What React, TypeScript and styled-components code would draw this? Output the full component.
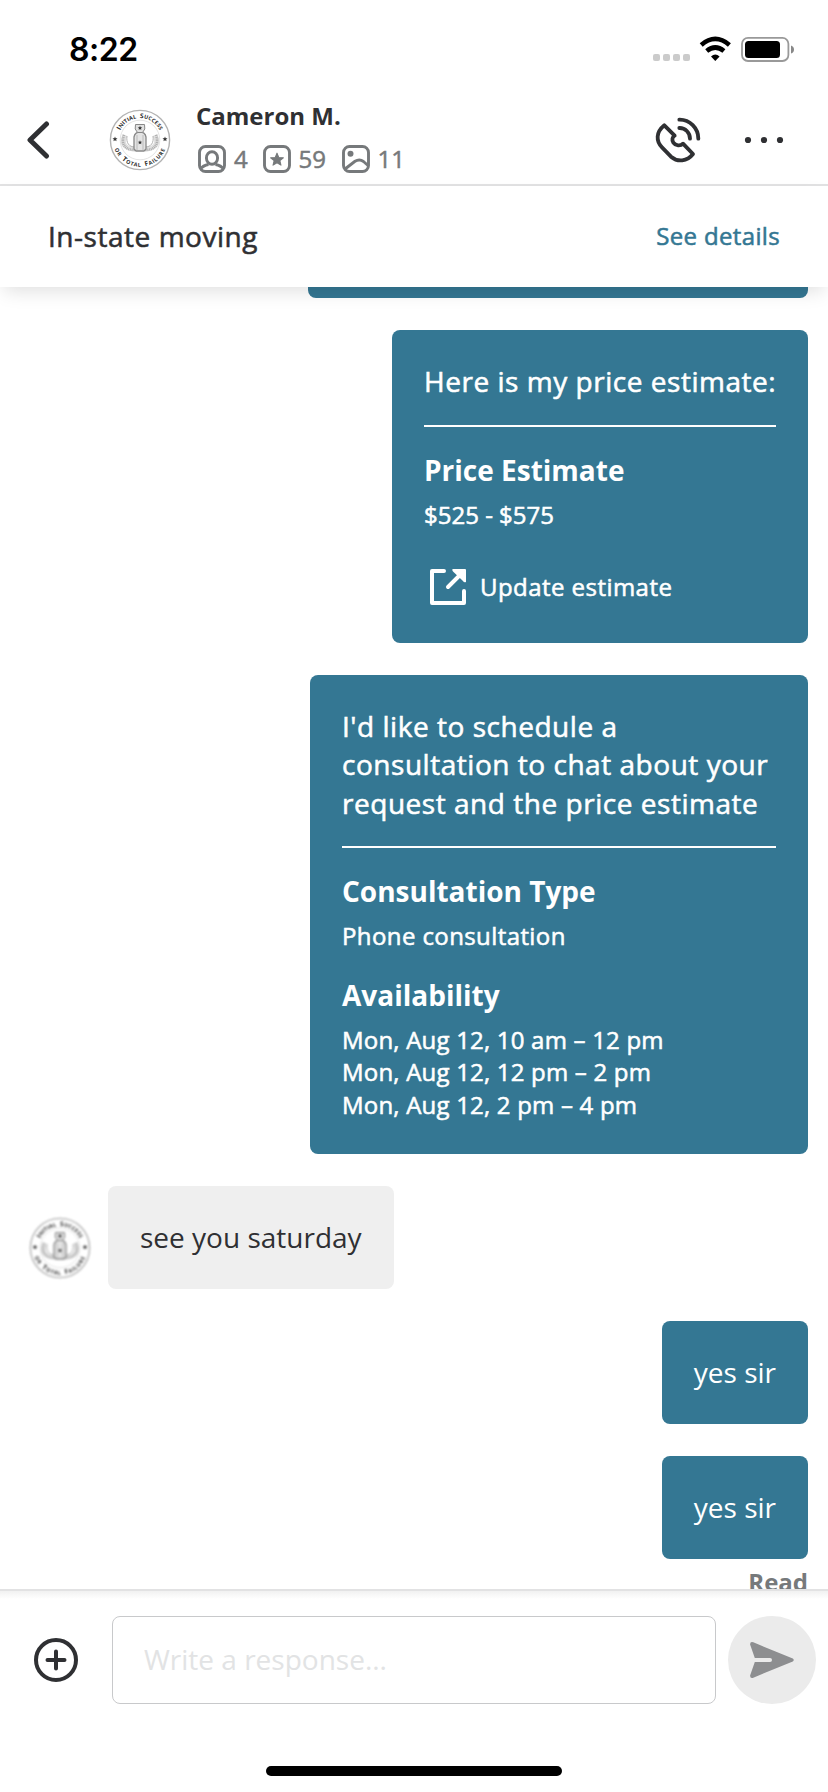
import { useId } from 'react';
import styled, { createGlobalStyle, css } from 'styled-components';

const teal = '#347793';
const mainText = '#2f3033';
const mutedText = '#76797b';
const white = '#ffffff';

const GlobalStyle = createGlobalStyle`
  * {
    box-sizing: border-box;
  }

  body {
    margin: 0;
    background: ${white};
    color: ${mainText};
    font-family: 'Open Sans', 'Noto Sans', sans-serif;
  }

  button {
    padding: 0;
    border: 0;
    background: transparent;
    font: inherit;
  }

  svg {
    display: block;
    flex-shrink: 0;
  }

  p, h1, h2, h3 {
    margin: 0;
  }
`;

// Open Sans has no static medium cut, so the regular one is thickened
const mediumText = css`
  font-weight: 400;
  letter-spacing: 0.53px;
  -webkit-text-stroke: 0.55px currentColor;
`;

const Screen = styled.div`
  display: flex;
  flex-direction: column;
  width: 828px;
  height: 1792px;
  overflow: hidden;
  background: ${white};
`;

const StatusBar = styled.div`
  display: flex;
  justify-content: space-between;
  flex-shrink: 0;
  height: 96px;
  padding: 30px 34px 0 69px;
`;

const Clock = styled.span`
  font: 600 32px/40px Inter, sans-serif;
  letter-spacing: -0.5px;
  color: #000;
`;

const Header = styled.header`
  display: flex;
  flex-shrink: 0;
  height: 90px;
  padding-left: 26px;
  border-bottom: 2px solid #e2e2e3;
`;

const BackButton = styled.button`
  width: 82px;
  height: 88px;
`;

const Contact = styled.div`
  display: flex;
  flex: 1;
  gap: 24px;
`;

const AvatarBox = styled.div<{ $soft?: boolean }>`
  width: 64px;
  height: 64px;
  margin-top: 12px;
  flex-shrink: 0;
  ${({ $soft }) => $soft && css`
    margin: 0 16px 9px 0;
    filter: blur(0.8px);
  `}
`;

const Name = styled.h1`
  padding-top: 3px;
  font-size: 24px;
  font-weight: 700;
  line-height: 33px;
`;

const Stats = styled.div`
  display: flex;
  align-items: center;
  margin: 10px 0 0 2px;
  color: ${mutedText};
  font-size: 24px;
  line-height: 34px;
  -webkit-text-stroke: 0.5px currentColor;
`;

const Stat = styled.div<{ $width: number }>`
  display: flex;
  align-items: center;
  gap: 8px;
  width: ${({ $width }) => $width}px;
`;

const HeaderActions = styled.div`
  display: flex;
  align-items: center;
  gap: 42px;
  padding: 0 44px 0 0;
`;

const JobBar = styled.div`
  position: relative;
  display: flex;
  align-items: center;
  justify-content: space-between;
  flex-shrink: 0;
  height: 101px;
  padding: 0 48px 2px;
  background: ${white};
  box-shadow: 0 8px 18px -4px rgba(0, 0, 0, 0.13);
`;

const JobTitle = styled.h2`
  ${mediumText}
  font-size: 28px;
  line-height: 38px;
`;

const DetailsLink = styled.button`
  ${mediumText}
  color: ${teal};
  font-size: 24px;
  line-height: 34px;
  letter-spacing: 0.35px;
`;

const Messages = styled.main`
  display: flex;
  flex-direction: column;
  align-items: flex-end;
  flex-shrink: 0;
  height: 1302px;
  padding-right: 20px;
  overflow: hidden;
`;

const bubble = css`
  border-radius: 8px;
  background: ${teal};
  color: ${white};
`;

const PreviousCard = styled.div`
  ${bubble}
  flex-shrink: 0;
  width: 500px;
  height: 43px;
  margin: -32px 0 32px;
`;

const Card = styled.section<{ $width: number; $height: number }>`
  ${bubble}
  flex-shrink: 0;
  width: ${({ $width }) => $width}px;
  height: ${({ $height }) => $height}px;
  margin-bottom: 32px;
  padding: 32px;
`;

const CardMessage = styled.p<{ $space: number }>`
  ${mediumText}
  padding-bottom: ${({ $space }) => $space}px;
  border-bottom: 2px solid ${white};
  font-size: 28px;
  line-height: 38.4px;
  white-space: pre;
`;

const CardTitle = styled.h3`
  margin-top: 24px;
  font-size: 28px;
  font-weight: 700;
  line-height: 38px;

  p + & {
    margin-top: 23px;
  }

  ${CardMessage} + & {
    margin-top: 24px;
  }
`;

const CardText = styled.p<{ $spacing?: number }>`
  ${mediumText}
  margin-top: 10px;
  font-size: 24px;
  line-height: 32.5px;
  letter-spacing: ${({ $spacing = 0.4 }) => $spacing}px;
  white-space: pre-line;
`;

const UpdateButton = styled.button`
  ${mediumText}
  display: flex;
  align-items: center;
  gap: 14px;
  margin: 36px 0 0 6px;
  color: ${white};
  font-size: 24px;
  line-height: 38px;
  letter-spacing: 0.45px;
`;

const Bubble = styled.p<{ $incoming?: boolean }>`
  ${bubble}
  flex-shrink: 0;
  height: 103px;
  padding: 32px;
  font-size: 28px;
  line-height: 39px;
  white-space: nowrap;
  ${({ $incoming }) => $incoming && css`
    background: #efefef;
    color: ${mainText};
  `}
`;

const IncomingRow = styled.div`
  display: flex;
  align-items: flex-end;
  align-self: flex-start;
  margin: 0 0 32px 28px;
`;

const Outgoing = styled.div`
  margin-bottom: 32px;

  &:last-of-type {
    margin-bottom: 7px;
  }
`;

const ReadReceipt = styled.p`
  color: ${mutedText};
  font-size: 24px;
  font-weight: 700;
  line-height: 32px;
`;

const Composer = styled.footer`
  display: flex;
  flex-shrink: 0;
  gap: 12px;
  height: 140px;
  padding: 25px 12px 0 34px;
  border-top: 2px solid #e2e2e3;
  background: linear-gradient(#f1f1f1, ${white} 8px);
`;

const AddButton = styled.button`
  width: 66px;
  height: 88px;
`;

const ResponseInput = styled.input`
  flex: 1;
  min-width: 0;
  height: 88px;
  padding: 0 31px 2px;
  border: 1px solid #c8c9cb;
  border-radius: 8px;
  outline: none;
  font: 400 28px 'Open Sans', 'Noto Sans', sans-serif;

  &::placeholder {
    color: #e2e3e4;
    opacity: 1;
  }
`;

const SendButton = styled.button`
  display: flex;
  align-items: center;
  justify-content: center;
  width: 88px;
  height: 88px;
  border-radius: 50%;
  background: #ebebeb;
`;

const HomeIndicator = styled.div`
  flex-shrink: 0;
  width: 296px;
  height: 10px;
  margin: 37px auto 0;
  border-radius: 5px;
  background: #000;
`;

const StatusIcons = () => (
	<svg width="142" height="36" viewBox="0 0 142 36">
		<g fill="#cbcbcb">
			<rect x="1" y="24" width="7" height="7" rx="2" />
			<rect x="11" y="24" width="7" height="7" rx="2" />
			<rect x="21" y="24" width="7" height="7" rx="2" />
			<rect x="31" y="24" width="7" height="7" rx="2" />
		</g>
		<g transform="translate(47.5 7.5)">
			<path d="M1.7 7.4Q15.8 -4.6 29.9 7.4" fill="none" stroke="#000" strokeWidth="4.6" />
			<path d="M7.2 13.6Q15.8 6.4 24.4 13.6" fill="none" stroke="#000" strokeWidth="4.6" />
			<path d="M11.5 19Q15.8 15.2 20.1 19L15.8 23.4Z" />
		</g>
		<rect x="90" y="7.8" width="46.4" height="23.2" rx="6" fill="none" stroke="#999" strokeWidth="1.8" />
		<rect x="93" y="11" width="35" height="17" rx="3.5" />
		<path d="M139 15.5Q142 16.5 142 19.5T139 23.5Z" fill="#888" />
	</svg>
);

const BackIcon = () => (
	<svg width="24" height="40" viewBox="0 0 24 40" fill="none" stroke={mainText} strokeWidth="5" strokeLinecap="round" strokeLinejoin="round">
		<path d="M20.5 4L4 20L20.5 36" />
	</svg>
);

const star = 'M0 -1L.28 -.32L1 -.27L.45 .18L.62 .88L0 .5L-.62 .88L-.45 .18L-1 -.27L-.28 -.32Z';

const Seal = () => {
	const id = useId();

	return (
		<svg width="64" height="64" viewBox="-32 -32 64 64">
			<defs>
				<path id={`${id}top`} d="M-22 0A22 22 0 0 1 22 0" />
				<path id={`${id}bottom`} d="M-26.8 0A26.8 26.8 0 0 0 26.8 0" />
			</defs>
			<g fill="none" stroke="#b3b3b3">
				<circle r="29.6" strokeWidth="1.4" />
				<circle r="19.8" stroke="#dcdcdc" strokeWidth="0.8" />
				<path d="M-15 -5C-19 3 -16 9 -5 9M15 -5C19 3 16 9 5 9" stroke="#dfdfdf" strokeWidth="5" />
				<path d="M-16 -5C-19 3 -16 10 -5 10M16 -5C19 3 16 10 5 10" stroke="#aaa" strokeWidth="2.6" strokeDasharray="0.9 0.9" />
				<path d="M-13 -4C-14 3 -11 7 -5 7M13 -4C14 3 11 7 5 7" stroke="#b4b4b4" />
				<path d="M-6 9V-3Q-5 -8 0 -8T6 -3V9L4 11H-4Z" fill="#e4e4e4" stroke="#888" strokeWidth="1.3" />
				<path d="M-3 10V-5M3 10V-5" stroke="#aaa" strokeWidth="0.7" />
				<path d="M-4.5 -15.5H4.5L4.8 -11L2.5 -7.5H-2.5L-4.8 -11Z" fill="#e0e0e0" stroke="#888" />
			</g>
			<g fill="#333">
				<path d={star} transform="translate(-25 -1) scale(2.5)" />
				<path d={star} transform="translate(25 -1) scale(2.5)" />
				<path d={star} transform="translate(0 -12) scale(2.2)" />
				<path d={star} transform="translate(0 2.4) scale(2.2)" />
			</g>
			<g fill="#2c2c2c" fontFamily="Open Sans, sans-serif" fontWeight="700" fontSize="6.6" textAnchor="middle" wordSpacing="1.5">
				<text letterSpacing="0.15">
					<textPath href={`#${id}top`} startOffset="50%">
						I<tspan fontSize="5.4">NITIAL</tspan> S<tspan fontSize="5.4">UCCESS</tspan>
					</textPath>
				</text>
				<text letterSpacing="0.65">
					<textPath href={`#${id}bottom`} startOffset="50%">
						<tspan fontSize="5.4">OR</tspan> T<tspan fontSize="5.4">OTAL</tspan> F<tspan fontSize="5.4">AILURE</tspan>
					</textPath>
				</text>
			</g>
		</svg>
	);
};

const statFrame = <rect x="1.5" y="1.5" width="25" height="25" rx="6" />;

const ProfileIcon = () => (
	<svg width="28" height="28" viewBox="0 0 28 28" fill="none" stroke={mutedText} strokeWidth="2.9">
		{statFrame}
		<ellipse cx="14" cy="13" rx="5.6" ry="6.3" />
		<path d="M2.5 24Q5 20.5 10.5 19.5M25.5 24Q23 20.5 17.5 19.5" />
	</svg>
);

const ReviewIcon = () => (
	<svg width="28" height="28" viewBox="0 0 28 28" fill="none" stroke={mutedText} strokeWidth="2.9">
		{statFrame}
		<path d={star} transform="translate(14 14.5) scale(6.4)" fill={mutedText} strokeWidth="0.16" strokeLinejoin="round" />
	</svg>
);

const PhotoIcon = () => (
	<svg width="28" height="28" viewBox="0 0 28 28" fill="none" stroke={mutedText} strokeWidth="2.9">
		{statFrame}
		<circle cx="8.5" cy="8.8" r="3" fill={mutedText} stroke="none" />
		<path d="M3 24L13 16.3Q17.5 13.5 21.5 16.5L26 20.5" />
	</svg>
);

const CallIcon = () => (
	<svg width="48" height="48" viewBox="720 345 144 144" fill="none" stroke={mainText} strokeWidth="11.5" strokeLinecap="round" strokeLinejoin="round">
		<path d="M751 373C725 394 726 421 744 439L771 467C791 484 819 482 837 459L807 428C799 436 785 435 778 425C773 416 775 408 782 404Z" />
		<path d="M796 381A31 32 0 0 1 828 413M796 356A56 57 0 0 1 853 413" />
	</svg>
);

const MoreIcon = () => (
	<svg width="40" height="8" viewBox="0 0 40 8" fill={mainText}>
		<circle cx="4" cy="4" r="3.1" />
		<circle cx="20" cy="4" r="3.1" />
		<circle cx="36" cy="4" r="3.1" />
	</svg>
);

const ExternalIcon = () => (
	<svg width="36" height="36" viewBox="0 0 36 36" fill="none" stroke={white} strokeWidth="4" strokeLinecap="round" strokeLinejoin="round">
		<path d="M14 2H2V34H34V22M18 18L29 7" />
		<path d="M23 0H35Q36 0 36 1V13Q34 14 33 12L23 2.5Q21.5 .5 23 0Z" fill={white} stroke="none" />
	</svg>
);

const AddIcon = () => (
	<svg width="44" height="44" viewBox="0 0 44 44" fill="none" stroke={mainText} strokeWidth="4" strokeLinecap="round">
		<circle cx="22" cy="22" r="20" />
		<path d="M13.5 22H30.5M22 13.5V30.5" />
	</svg>
);

const SendIcon = () => (
	<svg width="44" height="36" viewBox="0 0 44 36">
		<path d="M3.3 .3L42.8 16.6Q44.7 18 42.8 19.4L3.3 35.7Q0 36.7 .1 33.5L4.8 20H20Q22 20 22 18T20 16H4.8L.1 2.5Q0 -.7 3.3 .3Z" fill="#8d8e90" />
	</svg>
);

const App = () => (
	<>
		<GlobalStyle />
		<Screen>
			<StatusBar>
				<Clock>8:22</Clock>
				<StatusIcons />
			</StatusBar>
			<Header>
				<BackButton aria-label="Back"><BackIcon /></BackButton>
				<Contact>
					<AvatarBox><Seal /></AvatarBox>
					<div>
						<Name>Cameron M.</Name>
						<Stats>
							<Stat $width={64.5}><ProfileIcon />4</Stat>
							<Stat $width={79}><ReviewIcon />59</Stat>
							<Stat $width={64}><PhotoIcon />11</Stat>
						</Stats>
					</div>
				</Contact>
				<HeaderActions>
					<button aria-label="Call"><CallIcon /></button>
					<button aria-label="More"><MoreIcon /></button>
				</HeaderActions>
			</Header>
			<JobBar>
				<JobTitle>In-state moving</JobTitle>
				<DetailsLink>See details</DetailsLink>
			</JobBar>
			<Messages>
				<PreviousCard />
				<Card $width={416} $height={313}>
					<CardMessage $space={25}>Here is my price estimate:</CardMessage>
					<CardTitle>Price Estimate</CardTitle>
					<CardText $spacing={0}>$525 - $575</CardText>
					<UpdateButton>
						<ExternalIcon />
						Update estimate
					</UpdateButton>
				</Card>
				<Card $width={498} $height={479}>
					<CardMessage $space={24}>
						{'I\'d like to schedule a\nconsultation to chat about your\nrequest and the price estimate'}
					</CardMessage>
					<CardTitle>Consultation Type</CardTitle>
					<CardText>Phone consultation</CardText>
					<CardTitle>Availability</CardTitle>
					<CardText $spacing={0.2}>
						{'Mon, Aug 12, 10 am – 12 pm\nMon, Aug 12, 12 pm – 2 pm\nMon, Aug 12, 2 pm – 4 pm'}
					</CardText>
				</Card>
				<IncomingRow>
					<AvatarBox $soft><Seal /></AvatarBox>
					<Bubble $incoming>see you saturday</Bubble>
				</IncomingRow>
				<Outgoing><Bubble>yes sir</Bubble></Outgoing>
				<Outgoing><Bubble>yes sir</Bubble></Outgoing>
				<ReadReceipt>Read</ReadReceipt>
			</Messages>
			<Composer>
				<AddButton aria-label="Add attachment"><AddIcon /></AddButton>
				<ResponseInput placeholder="Write a response..." />
				<SendButton aria-label="Send"><SendIcon /></SendButton>
			</Composer>
			<HomeIndicator />
		</Screen>
	</>
);

export default App;
